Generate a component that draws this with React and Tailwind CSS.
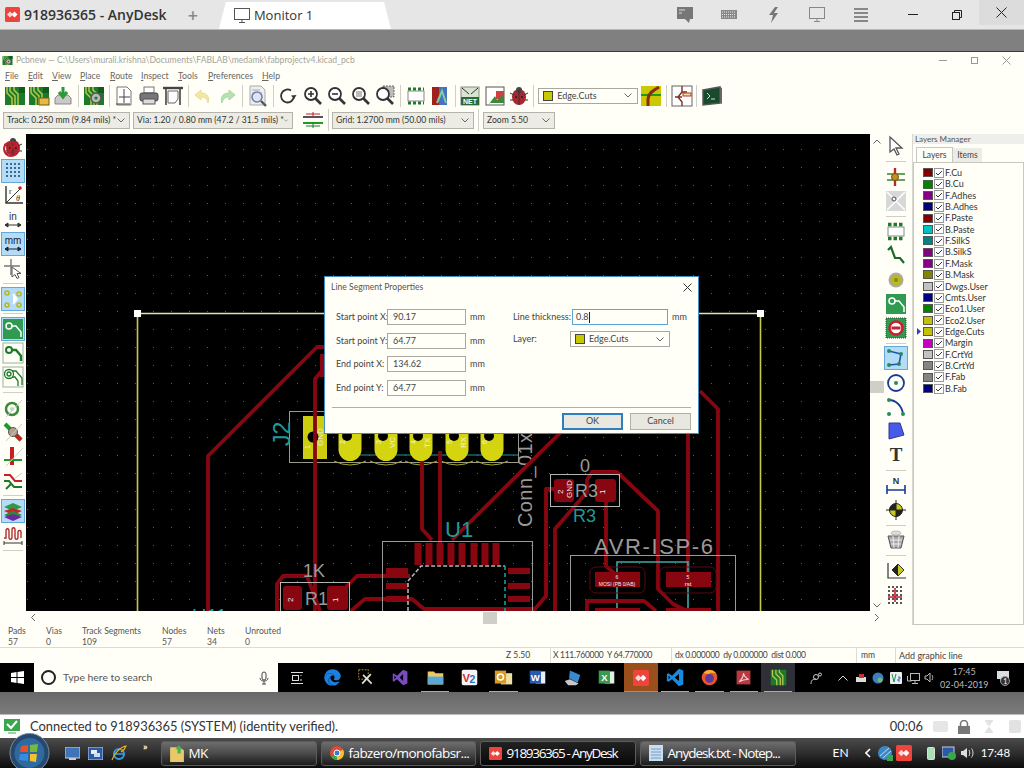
import { FaEdge } from "react-icons/fa";

const sans = "font-['Lato',sans-serif]";
const wide = "font-['Open_Sans',sans-serif]";

const Svg = ({ s = 22, v = 22, children }) => (
  <svg width={s} height={s} viewBox={`0 0 ${v} ${v}`} fill="none">{children}</svg>
);

const board = (
  <>
    <rect x="1" y="2" width="20" height="18" fill="#1c7a2a" />
    <path d="M3 2v6l5 5v7M6 2v4l5 5v9M10 2v3l4 4v11" stroke="#b9c94a" strokeWidth="1.5" />
    <rect x="15" y="2" width="6" height="6" fill="#0f5c1c" />
  </>
);

const glass = (extra) => (
  <>
    <circle cx="9" cy="9" r="6" stroke="#333" strokeWidth="1.8" fill="#fff" />
    <path d="M13.5 13.5L19 19" stroke="#333" strokeWidth="2.6" />
    {extra}
  </>
);

// top toolbar
const top = {
  newBoard: board,
  openBoard: (
    <>
      {board}
      <rect x="11" y="13" width="10" height="7" fill="#e8b93c" stroke="#6b5a1c" />
    </>
  ),
  save: (
    <>
      <path d="M3 13l3-3h10l3 3v6H3z" fill="#c9c9c9" stroke="#888" />
      <path d="M11 2v9M7 7l4 5 4-5" stroke="#2a9a3a" strokeWidth="3" />
    </>
  ),
  gearBoard: (
    <>
      {board}
      <circle cx="13" cy="13" r="5" fill="#b8b8b8" stroke="#555" strokeWidth="1.5" />
      <circle cx="13" cy="13" r="1.6" fill="#1c7a2a" />
    </>
  ),
  pageSetup: (
    <>
      <path d="M4 2h10l4 4v14H4z" stroke="#777" fill="#fff" />
      <path d="M11 4v14M6 12h11M3 19h14" stroke="#444" />
    </>
  ),
  print: (
    <>
      <rect x="6" y="2" width="10" height="6" fill="#fff" stroke="#777" />
      <rect x="2" y="8" width="18" height="8" rx="2" fill="#777" stroke="#444" />
      <rect x="5" y="14" width="12" height="5" fill="#ddd" stroke="#555" />
    </>
  ),
  plot: (
    <>
      <path d="M1 3h20" stroke="#444" strokeWidth="2.4" />
      <path d="M4 4v16M18 4v16" stroke="#444" strokeWidth="1.6" />
      <path d="M6 6h10v8l-3 4H6z" fill="#fff" stroke="#666" />
    </>
  ),
  undo: <path d="M9 5L3 10l6 5v-3c4 0 6 2 7 6 2-6-1-10-7-10z" fill="#f0e8a8" stroke="#e8dc90" />,
  redo: <path d="M13 5l6 5-6 5v-3c-4 0-6 2-7 6-2-6 1-10 7-10z" fill="#b8e0b0" stroke="#a8d8a0" />,
  find: (
    <>
      <path d="M3 1h11l4 4v15H3z" fill="#eee" stroke="#aaa" />
      <path d="M5 5h8M5 8h10" stroke="#aaa" />
      <circle cx="10" cy="12" r="5" stroke="#7080b0" strokeWidth="1.6" fill="#dfe4f2" />
      <path d="M14 16l5 5" stroke="#555" strokeWidth="2.4" />
    </>
  ),
  refresh: (
    <>
      <path d="M17 11a6.5 6.5 0 1 1-3-5.5" stroke="#333" strokeWidth="1.8" />
      <path d="M19.5 10l-2.5 4-3-3.5z" fill="#333" />
    </>
  ),
  zoomIn: glass(<path d="M6 9h6M9 6v6" stroke="#333" strokeWidth="1.6" />),
  zoomOut: glass(<path d="M6 9h6" stroke="#333" strokeWidth="1.6" />),
  zoomFit: glass(<rect x="6" y="6" width="6" height="6" fill="#bbb" />),
  zoomArea: (
    <>
      <rect x="9" y="1" width="11" height="11" fill="#bbb" stroke="#666" strokeDasharray="2 1" />
      {glass(null)}
    </>
  ),
  footprint: (
    <>
      <rect x="3" y="6" width="16" height="10" fill="#fff" stroke="#888" />
      <path d="M3 4h16M3 18h16" stroke="#1c7a2a" strokeWidth="3" strokeDasharray="3 2" />
    </>
  ),
  library: (
    <>
      <rect x="3" y="2" width="7" height="18" fill="#a02020" />
      <rect x="10" y="2" width="8" height="18" fill="#4a70c0" />
      <path d="M8 18l5-12 4 12" stroke="#7ad0a0" strokeWidth="2" />
    </>
  ),
  net: (
    <>
      <rect x="2" y="2" width="18" height="18" fill="#d8e4d0" stroke="#888" />
      <path d="M3 3l7 6M19 3l-7 6" stroke="#333" />
      <rect x="2" y="12" width="18" height="8" fill="#2c6a3a" />
      <text x="11" y="19" textAnchor="middle" fontSize="7" fontWeight="700" fill="#fff" fontFamily="Liberation Sans">NET</text>
    </>
  ),
  boardArrow: (
    <>
      <rect x="2" y="2" width="18" height="18" fill="#fff" stroke="#555" />
      <path d="M12 6h8v8h-8zM2 12l6 0" fill="#d04040" />
      <path d="M5 19l6-8 2 4 7-6v9H5z" fill="#3a8a3a" />
    </>
  ),
  bug: (
    <>
      <ellipse cx="11" cy="12" rx="7" ry="8" fill="#a82830" />
      <circle cx="11" cy="5" r="3" fill="#444" />
      <path d="M2 8l4 2M20 8l-4 2M2 15h3M20 15h-3M11 5v15" stroke="#333" />
      <circle cx="8" cy="12" r="1" fill="#222" />
      <circle cx="14" cy="12" r="1" fill="#222" />
    </>
  ),
  layerPair: (
    <>
      <rect x="1" y="1" width="20" height="20" fill="#ccc800" />
      <path d="M1 10h20" stroke="#1c9a2a" strokeWidth="2" />
      <path d="M8 21v-7c0-5 4-8 11-12" stroke="#8a2a10" strokeWidth="3" />
    </>
  ),
  schematic: (
    <>
      <rect x="1" y="1" width="20" height="20" fill="#fff" stroke="#666" />
      <path d="M11 1v6M11 7l-4 5 4 5v4M11 7h5M11 12h-7" stroke="#7a3020" strokeWidth="1.4" />
      <rect x="12" y="8" width="8" height="3" fill="#e8e0a0" stroke="#c03020" />
    </>
  ),
  terminal: (
    <>
      <path d="M2 5l17-3v16l-17 2z" fill="#1a4a2e" stroke="#555" strokeWidth="1.5" />
      <path d="M19 2l2 1v16l-2-1" fill="#666" />
      <path d="M6 8l3 3-3 3M10 14h4" stroke="#bfe8c8" />
    </>
  ),
};

// left toolbar
const left = {
  noDrc: (
    <>
      {top.bug}
      <circle cx="9" cy="13" r="7" stroke="#c02030" strokeWidth="2" />
      <path d="M4 18L14 8" stroke="#c02030" strokeWidth="2" />
    </>
  ),
  grid: <path d="M4 4h14M4 8h14M4 12h14M4 16h14" stroke="#3a6a9a" strokeWidth="2" strokeDasharray="2 2" />,
  polar: (
    <>
      <path d="M4 2v17h17" stroke="#333" strokeWidth="1.4" />
      <path d="M4 19L18 5" stroke="#333" />
      <circle cx="18" cy="4" r="1.8" fill="#c02030" />
      <text x="7" y="10" fontSize="8" fill="#333" fontFamily="Liberation Serif">r</text>
      <text x="14" y="17" fontSize="8" fill="#333" fontFamily="Liberation Serif" fontStyle="italic">θ</text>
    </>
  ),
  inch: (
    <>
      <text x="11" y="11" textAnchor="middle" fontSize="10" fill="#333" fontFamily="Liberation Sans">in</text>
      <path d="M3 16h16M3 16l3-2v4zM19 16l-3-2v4z" stroke="#333" fill="#333" />
    </>
  ),
  mm: (
    <>
      <text x="11" y="11" textAnchor="middle" fontSize="10" fill="#223" fontFamily="Liberation Sans">mm</text>
      <path d="M3 16h16M3 16l3-2v4zM19 16l-3-2v4z" stroke="#223" fill="#223" />
    </>
  ),
  cursor: (
    <>
      <path d="M9 2v16M2 9h16" stroke="#777" strokeWidth="1.4" />
      <path d="M10 10v10l3-2.5 2 4 2-1-2-4h4z" fill="#fff" stroke="#555" />
    </>
  ),
  ratsnest: (
    <>
      <path d="M11 6l4 5-4 5" fill="#fff" stroke="#fff" strokeWidth="2" />
      <circle cx="5" cy="5" r="2" stroke="#b8b820" strokeWidth="1.6" />
      <circle cx="17" cy="6" r="2" stroke="#b8b820" strokeWidth="1.6" />
      <circle cx="5" cy="17" r="2" stroke="#b8b820" strokeWidth="1.6" />
      <circle cx="17" cy="17" r="2" stroke="#b8b820" strokeWidth="1.6" />
    </>
  ),
  zoneFill: (
    <>
      <rect x="1" y="1" width="20" height="20" fill="#2f9a50" />
      <circle cx="7" cy="8" r="3" stroke="#fff" strokeWidth="1.5" />
      <path d="M10 8h4l5 6v5" stroke="#fff" strokeWidth="1.5" />
    </>
  ),
  zoneLine: (
    <>
      <rect x="1" y="1" width="20" height="20" stroke="#9cb09c" />
      <circle cx="7" cy="8" r="3" stroke="#1c7a2a" strokeWidth="2" />
      <path d="M10 8h4l5 6v5" stroke="#1c7a2a" strokeWidth="2.4" />
    </>
  ),
  zoneDouble: (
    <>
      <rect x="1" y="1" width="20" height="20" stroke="#9cb09c" />
      <circle cx="7" cy="8" r="4.5" stroke="#1c7a2a" strokeWidth="1.3" />
      <circle cx="7" cy="8" r="2" stroke="#1c7a2a" strokeWidth="1.3" />
      <path d="M10 5h4l6 7v7M10 11h3l3 4v5" stroke="#1c7a2a" strokeWidth="1.3" />
    </>
  ),
  ring: (
    <>
      <circle cx="10" cy="12" r="6" stroke="#3a8a3a" strokeWidth="2.5" />
      <circle cx="10" cy="12" r="2" fill="#bcd8bc" />
      <path d="M4 20L20 3" stroke="#ccc" />
    </>
  ),
  trackBall: (
    <>
      <path d="M3 3l16 16" stroke="#1c9a2a" strokeWidth="4" />
      <path d="M11 11l8 8" stroke="#c82020" strokeWidth="4" />
      <circle cx="11" cy="11" r="4.5" fill="#b8a090" stroke="#555" />
      <path d="M4 20L20 3" stroke="#ccc" />
    </>
  ),
  padTrack: (
    <>
      <path d="M10 2v18" stroke="#c82020" strokeWidth="4" />
      <path d="M2 15h18" stroke="#1c9a2a" strokeWidth="2" />
      <path d="M4 21L21 3" stroke="#ccc" />
    </>
  ),
  hv: (
    <>
      <path d="M2 6l6 0 5 6 7 0" stroke="#c82020" strokeWidth="2" />
      <path d="M2 12l5 0 5 6 8 0M4 20l6-6" stroke="#1c7a2a" strokeWidth="2" />
      <path d="M12 10l8-6" stroke="#ccc" />
    </>
  ),
  layers: (
    <>
      <path d="M2 7l9-4 9 4-9 4z" fill="#2e9a4a" />
      <path d="M2 11l9-3 9 3-9 4z" fill="#c82828" />
      <path d="M2 15l9-4 9 4-9 4z" fill="#2a8a3a" />
      <path d="M2 17l9-3 9 3-9 4z" fill="#6a2aa0" />
    </>
  ),
  wave: (
    <>
      <path d="M2 14h2V7c0-3 3-3 3 0v6c0 3 3 3 3 0V6c0-3 3-3 3 0v7c0 3 3 3 3 0V8c0-2 3-2 3 0v6" stroke="#b03030" strokeWidth="1.4" />
      <path d="M2 19h18M2 17v4M20 17v4" stroke="#333" />
    </>
  ),
};

// right toolbar
const right = {
  arrow: <path d="M5 2v15l4-3 3 6 2-1-3-6h6z" fill="#fff" stroke="#555" strokeWidth="1.3" />,
  route: (
    <>
      <path d="M10 2v18" stroke="#b03020" strokeWidth="2.4" />
      <path d="M2 8h18M2 14h18" stroke="#6aa05a" strokeWidth="2" />
      <circle cx="10" cy="11" r="3.5" fill="#c09020" stroke="#7a4a10" />
    </>
  ),
  local: (
    <>
      <rect x="1" y="1" width="20" height="20" fill="#d8d8d8" />
      <path d="M2 20L20 2M2 2l18 18" stroke="#fff" strokeWidth="1.5" />
      <circle cx="9" cy="9" r="2" stroke="#555" />
    </>
  ),
  addFp: left.zoneFill,
  chip: (
    <>
      <rect x="3" y="7" width="16" height="9" stroke="#888" fill="#fff" />
      <path d="M3 4.5h16M3 18.5h16" stroke="#1c7a2a" strokeWidth="3.5" strokeDasharray="3.5 2" />
    </>
  ),
  track: <path d="M3 6l3-3 4 11h5l4 5" stroke="#1c6a2a" strokeWidth="2.2" />,
  via: (
    <>
      <circle cx="11" cy="11" r="6.5" fill="#b8b820" stroke="#aaa" strokeWidth="2" />
      <circle cx="11" cy="11" r="2" fill="#8a8a10" />
    </>
  ),
  keepout: (
    <>
      <rect x="1" y="1" width="20" height="20" fill="#2f9a50" stroke="#1c5a2a" strokeDasharray="1 1" />
      <circle cx="11" cy="11" r="6.5" fill="#fff" stroke="#c82030" strokeWidth="2.5" />
      <path d="M6.5 11h9" stroke="#c82030" strokeWidth="3" />
    </>
  ),
  line: (
    <>
      <path d="M4 4l12 3-2 10-10 1" stroke="#1a58b0" strokeWidth="1.6" />
      <circle cx="4" cy="4" r="2" fill="#2a8a5a" />
      <circle cx="16" cy="7" r="2" fill="#2a8a5a" />
      <circle cx="14" cy="17" r="2" fill="#2a8a5a" />
      <circle cx="4" cy="18" r="2" fill="#2a8a5a" />
    </>
  ),
  circle: (
    <>
      <circle cx="11" cy="11" r="8" stroke="#1a3a9a" strokeWidth="1.8" />
      <circle cx="11" cy="11" r="2" fill="#2a8a5a" />
    </>
  ),
  arc: (
    <>
      <path d="M4 4c7 0 13 6 14 14" stroke="#1a3a9a" strokeWidth="1.8" />
      <circle cx="4" cy="4" r="2" fill="#2a8a5a" />
      <circle cx="4" cy="18" r="2" fill="#2a8a5a" />
      <circle cx="18" cy="18" r="2" fill="#2a8a5a" />
    </>
  ),
  poly: <path d="M4 3h11l4 12-15 4z" fill="#4a5ae8" stroke="#2a3a9a" />,
  text: <text x="11" y="17" textAnchor="middle" fontSize="19" fontWeight="700" fill="#333" fontFamily="Liberation Serif">T</text>,
  dim: (
    <>
      <text x="11" y="9" textAnchor="middle" fontSize="9" fontWeight="700" fill="#333" fontFamily="Liberation Sans">N</text>
      <path d="M2 10v9M20 10v9M2 15h18" stroke="#1a3a9a" strokeWidth="1.6" />
    </>
  ),
  target: (
    <>
      <circle cx="11" cy="11" r="6.5" fill="#c8c820" stroke="#222" />
      <path d="M11 11h6.5A6.5 6.5 0 0 1 11 17.5zM11 11h-6.5A6.5 6.5 0 0 1 11 4.5z" fill="#222" />
      <path d="M1 11h20M11 1v20" stroke="#222" />
    </>
  ),
  trash: (
    <>
      <path d="M3 7h16l-3 12H6z" fill="#aaa" stroke="#555" />
      <path d="M5 11h12M6 15h10M8 7l1 12M14 7l-1 12" stroke="#eee" />
      <ellipse cx="11" cy="4" rx="5" ry="2" fill="#ddd" stroke="#bbb" />
    </>
  ),
  origin: (
    <>
      <path d="M3 3v15h18" stroke="#333" strokeWidth="1.2" />
      <path d="M13 4l6 6-6 6-6-6z" fill="#c8c820" stroke="#333" />
      <path d="M13 4v12h0l-6-6z" fill="#222" />
    </>
  ),
  gridOrigin: (
    <>
      <path d="M3 3h16M3 7h16M3 11h16M3 15h16M3 19h16" stroke="#555" strokeWidth="1.8" strokeDasharray="2 2" />
      <path d="M10 4v14M3 13h14" stroke="#c02030" strokeWidth="1.6" />
    </>
  ),
};

const Sep = ({ vertical }) =>
  vertical ? (
    <div className="flex h-[6.3px] w-full items-center justify-center">
      <div className="h-px w-[20px] bg-[#cfcfc8]" />
    </div>
  ) : (
    <div className="flex h-full w-[6.3px] items-center justify-center">
      <div className="h-[22px] w-px bg-[#cfcfc8]" />
    </div>
  );

const Tool = ({ icon, active, vertical }) => (
  <div className={`flex shrink-0 items-center justify-center ${vertical ? "h-[24.2px] w-full" : "h-full w-[24.2px]"}`}>
    <div className={`flex h-[24px] w-[24px] items-center justify-center ${active ? "border border-[#62a8d8] bg-[#b4dcf6]" : ""}`}>
      <Svg>{icon}</Svg>
    </div>
  </div>
);

const Chevron = ({ className = "" }) => (
  <svg className={className} width="8" height="5" viewBox="0 0 8 5" fill="none">
    <path d="M0.5 0.5L4 4l3.5-3.5" stroke="#666" />
  </svg>
);

const Combo = ({ className, children }) => (
  <div className={`flex h-[17px] shrink-0 items-center justify-between border border-[#b4b4ac] bg-[#ecece4] pl-[3px] pr-[4px] text-[8.6px] text-[#333] ${className}`}>
    <span className="whitespace-nowrap">{children}</span>
    <Chevron />
  </div>
);

const menus = [
  ["F", "ile", "w-[23px]"],
  ["E", "dit", "w-[24px]"],
  ["V", "iew", "w-[28px]"],
  ["P", "lace", "w-[30px]"],
  ["R", "oute", "w-[31px]"],
  ["I", "nspect", "w-[37px]"],
  ["T", "ools", "w-[30px]"],
  ["P", "references", "w-[54px]"],
  ["H", "elp", "w-[24px]"],
];

const layers = [
  ["F.Cu", "bg-[#840000]"],
  ["B.Cu", "bg-[#008400]"],
  ["F.Adhes", "bg-[#840084]"],
  ["B.Adhes", "bg-[#000084]"],
  ["F.Paste", "bg-[#840000]"],
  ["B.Paste", "bg-[#00c2c2]"],
  ["F.SilkS", "bg-[#008484]"],
  ["B.SilkS", "bg-[#840084]"],
  ["F.Mask", "bg-[#840084]"],
  ["B.Mask", "bg-[#848400]"],
  ["Dwgs.User", "bg-[#c2c2c2]"],
  ["Cmts.User", "bg-[#000084]"],
  ["Eco1.User", "bg-[#008400]"],
  ["Eco2.User", "bg-[#c2c200]"],
  ["Edge.Cuts", "bg-[#c2c200]"],
  ["Margin", "bg-[#c200c2]"],
  ["F.CrtYd", "bg-[#c2c2c2]"],
  ["B.CrtYd", "bg-[#848484]"],
  ["F.Fab", "bg-[#848484]"],
  ["B.Fab", "bg-[#000084]"],
];

const stats = [
  ["Pads", "57", "w-[38px]"],
  ["Vias", "0", "w-[36px]"],
  ["Track Segments", "109", "w-[80px]"],
  ["Nodes", "57", "w-[45px]"],
  ["Nets", "34", "w-[38px]"],
  ["Unrouted", "0", "w-[60px]"],
];

function PcbCanvas() {
  const red = "#87060f";
  const gray = "#9a9a9a";
  const teal = "#1f9a9a";
  const trace = { stroke: red, strokeWidth: 3.8, fill: "none", strokeLinejoin: "round" };
  const jPads = [
    [350, "2", ""],
    [386, "3", "VC"],
    [421, "4", "TX"],
    [457, "5", "RX"],
    [492, "6", ""],
  ];
  return (
    <svg className="h-full w-full" viewBox="26 135 844 477" fontFamily="Liberation Sans">
      <defs>
        <pattern id="dots" x="9" y="6" width="18" height="18" patternUnits="userSpaceOnUse">
          <rect width="1" height="1" fill="#5f5f48" />
        </pattern>
      </defs>
      <rect x="26" y="135" width="844" height="477" fill="#000" />
      <rect x="26" y="135" width="844" height="477" fill="url(#dots)" />

      {/* board edge */}
      <path d="M137.5 612V314M760.5 314V612" stroke="#c8c84a" strokeWidth="1.6" />
      <path d="M137 314.5H760" stroke="#e2e2b8" strokeWidth="1.6" />
      <rect x="134" y="311" width="7" height="7" fill="#fff" />
      <rect x="757" y="311" width="7" height="7" fill="#fff" />

      {/* J2 */}
      <rect x="289.5" y="412.5" width="229" height="51" stroke="#9a9a8a" fill="none" />
      <path d="M340 456H518" stroke="#1f9a9a" />
      <rect x="303" y="417" width="24" height="43" fill="#cccc10" />
      {jPads.map(([x, num, name]) => (
        <g key={x}>
          <rect x={x - 11.5} y="405" width="23" height="57" rx="11.5" fill="#d4d410" />
          <path d={`M${x - 16} 462q16 8 32 0`} stroke="#a8a830" fill="none" />
          <circle cx={x - 3} cy="437" r="5" fill="#000" />
          <text transform={`translate(${x - 5} 445) rotate(-90)`} fontSize="7" fill="#f4f4d8">{num}</text>
          <text transform={`translate(${x + 9} 449) rotate(-90)`} fontSize="8" fill="#f4f4d8">{name}</text>
        </g>
      ))}
      <circle cx="313" cy="438" r="5.5" fill="#000" />
      <text transform="translate(323 447) rotate(-90)" fontSize="8" fill="#f4f4d8">GND</text>
      <text transform="translate(310 450) rotate(-90)" fontSize="7" fill="#f4f4d8">1</text>
      <text transform="translate(290 447) rotate(-90)" fontSize="23" fill={teal}>J2</text>
      <text transform="translate(532 528) rotate(-90)" fontSize="20" textLength="94" fill={gray}>Conn_01x</text>

      {/* tracks */}
      <path d="M208 612V457L317 348H325" {...trace} />
      <path d="M315 612V380L325 368" {...trace} />
      <rect x="320" y="355" width="7" height="23" fill={red} />
      <path d="M422 462V530L432 541" {...trace} />
      <path d="M440 452V545" {...trace} />
      <path d="M561 433L452 541" {...trace} />
      <path d="M555 490H546V597L535 610H424L412 600H365L351 612" {...trace} />
      <path d="M555 612V530L587 493V481L592 473H617L658 512V590L673 605L687 612" {...trace} />
      <path d="M606 503V567L615 575" {...trace} />
      <path d="M688 434V575" {...trace} />
      <path d="M700 392L718 410V612" {...trace} />
      <path d="M410 577H357L347 587L343 597" {...trace} />
      <path d="M277 612V585L283 577H307L320 612" {...trace} />

      {/* U1 */}
      <rect x="382.5" y="542.5" width="150" height="80" stroke={gray} fill="none" />
      {[418, 429, 440, 451, 462, 474, 485, 496].map((x) => (
        <rect key={x} x={x - 3.5} y="544" width="7" height="22" fill={red} />
      ))}
      {[572, 587, 600].map((y) => (
        <g key={y}>
          <rect x="386" y={y - 3} width="22" height="6" fill={red} />
          <rect x="508" y={y - 3} width="22" height="6" fill={red} />
        </g>
      ))}
      <path d="M408 612V582L421 567H505" stroke="#b4b4b4" strokeWidth="1.6" strokeDasharray="4 2" fill="none" />
      <path d="M505 567V612" stroke="#1f9a9a" strokeWidth="1.6" strokeDasharray="4 3" fill="none" />
      <text x="445" y="538" fontSize="22" fill={teal}>U1</text>

      {/* R1 */}
      <rect x="280.5" y="583.5" width="69" height="40" stroke="#b4b4b4" fill="none" />
      <rect x="283" y="587" width="19" height="24" rx="3" fill={red} />
      <rect x="327" y="587" width="21" height="24" rx="3" fill={red} />
      <text x="303" y="578" fontSize="18" fill={gray}>1K</text>
      <text x="305" y="606" fontSize="18" fill={gray}>R1</text>
      <text transform="translate(293 603) rotate(-90)" fontSize="8" fill="#eee">2</text>
      <text transform="translate(338 603) rotate(-90)" fontSize="8" fill="#eee">1</text>

      {/* R3 */}
      <rect x="550.5" y="475.5" width="69" height="32" stroke="#b4b4b4" fill="none" />
      <rect x="554" y="480" width="20" height="23" rx="3" fill={red} />
      <rect x="595" y="480" width="21" height="23" rx="3" fill={red} />
      <text x="580" y="473" fontSize="18" fill={gray}>0</text>
      <text x="575" y="498" fontSize="18" fill={gray}>R3</text>
      <text x="573" y="523" fontSize="18" fill={teal}>R3</text>
      <text transform="translate(563 495) rotate(-90)" fontSize="8" fill="#eee">2</text>
      <text transform="translate(572 499) rotate(-90)" fontSize="8" fill="#eee">GND</text>
      <text transform="translate(605 495) rotate(-90)" fontSize="8" fill="#eee">1</text>

      {/* AVR-ISP-6 */}
      <text x="594" y="555" fontSize="22" textLength="119" fill={gray}>AVR-ISP-6</text>
      <rect x="570.5" y="556.5" width="165" height="70" stroke={gray} fill="none" />
      <path d="M617 612V563H688V612" stroke="#3fa8a8" strokeWidth="1.6" fill="none" />
      <rect x="590" y="568" width="55" height="26" rx="6" stroke="#5a0a10" fill="none" />
      <rect x="660" y="568" width="56" height="26" rx="6" stroke="#5a0a10" fill="none" />
      <rect x="595" y="573" width="45" height="15" fill={red} />
      <rect x="666" y="573" width="45" height="15" fill={red} />
      <text x="617" y="580" textAnchor="middle" fontSize="5" fill="#eee">6</text>
      <text x="617" y="587" textAnchor="middle" fontSize="5" fill="#eee">MOSI (PB 0/AB)</text>
      <text x="688" y="580" textAnchor="middle" fontSize="5" fill="#eee">5</text>
      <text x="688" y="587" textAnchor="middle" fontSize="6" fill="#eee">rst</text>
      <path d="M587 612V602H644L656 612" {...trace} />
      <rect x="595" y="609" width="45" height="5" fill={red} />
      <rect x="666" y="609" width="45" height="5" fill={red} />
      <text x="192" y="624" fontSize="20" fill={teal}>U11</text>
    </svg>
  );
}

function Dialog() {
  const field = "flex h-[16px] w-[79px] items-center border border-[#a8a8a0] bg-[#fffff8] pl-[5px]";
  const rows = [
    ["Start point X:", "90.17"],
    ["Start point Y:", "64.77"],
    ["End point X:", "134.62"],
    ["End point Y:", "64.77"],
  ];
  return (
    <div className="absolute left-[324px] top-[276px] flex h-[158px] w-[375px] flex-col border border-[#3f8fc4] bg-[#fffff8] text-[9px] text-[#444]">
      <div className="flex h-[21px] items-center justify-between pl-[6px] pr-[6px]">
        <span className="text-[8.6px] text-[#555]">Line Segment Properties</span>
        <svg width="9" height="9" viewBox="0 0 9 9" fill="none">
          <path d="M0.5 0.5l8 8M8.5 0.5l-8 8" stroke="#333" />
        </svg>
      </div>
      <div className="flex pl-[11px] pt-[11px]">
        <div className="flex w-[177px] flex-col gap-[7.5px]">
          {rows.map(([label, value]) => (
            <div key={label} className="flex items-center">
              <span className="w-[51px] whitespace-nowrap">{label}</span>
              <div className={field}>{value}</div>
              <span className="ml-[4px]">mm</span>
            </div>
          ))}
        </div>
        <div className="flex flex-col gap-[6px]">
          <div className="flex items-center">
            <span className="w-[59px] whitespace-nowrap">Line thickness:</span>
            <div className="flex h-[16px] w-[96px] items-center border border-[#5aa8d8] pl-[3px]">
              0.8<span className="h-[11px] w-px bg-[#222]" />
            </div>
            <span className="ml-[4px]">mm</span>
          </div>
          <div className="flex items-center">
            <span className="w-[57px]">Layer:</span>
            <div className="flex h-[16px] w-[100px] items-center justify-between border border-[#a8a8a0] pl-[4px] pr-[5px]">
              <span className="flex items-center gap-[4px]">
                <span className="h-[10px] w-[10px] border border-[#444] bg-[#c8c800]" />
                Edge.Cuts
              </span>
              <Chevron />
            </div>
          </div>
        </div>
      </div>
      <div className="mx-[7px] mt-[11px] h-px bg-[#b0b0a8]" />
      <div className="flex justify-end gap-[7px] pr-[7px] pt-[5px]">
        <div className="flex h-[17px] w-[61px] items-center justify-center border-2 border-[#2f7fc0] bg-[#e8e8e0]">OK</div>
        <div className="flex h-[17px] w-[61px] items-center justify-center border border-[#b0b0a8] bg-[#e8e8e0]">Cancel</div>
      </div>
    </div>
  );
}

function AnyDeskMark({ s = 15 }) {
  return (
    <svg width={s} height={s} viewBox="0 0 15 15">
      <rect width="15" height="15" rx="1.5" fill="#ef443b" />
      <path d="M5 4.5l3 3-3 3-3-3z" fill="#fff" opacity="0.8" />
      <path d="M9.5 4.5l3 3-3 3-3-3z" fill="#fff" />
    </svg>
  );
}

const taskIcons = {
  tools: (
    <>
      <rect x="2" y="2" width="11" height="11" stroke="#c8a030" strokeDasharray="2 1.5" />
      <path d="M6 18L16 7M7 8l10 10" stroke="#ddd" strokeWidth="2" />
    </>
  ),
  vs: <path d="M14 2l5 2v14l-5 2-7-7-4 3-1-1V7l1-1 4 3zM14 7l-4 4 4 4zM4 9v4l2-2z" fill="#7a4ac0" />,
  folder: (
    <>
      <path d="M2 4h7l2 2h9v13H2z" fill="#e8c868" />
      <rect x="2" y="10" width="18" height="9" fill="#58a8d8" />
    </>
  ),
  v2: (
    <>
      <rect x="2" y="2" width="18" height="18" rx="2" fill="#f4f4f4" />
      <text x="3" y="16" fontSize="13" fontWeight="700" fill="#c83030" fontFamily="Liberation Sans">V</text>
      <text x="11" y="17" fontSize="12" fontWeight="700" fill="#2a70c0" fontFamily="Liberation Sans">2</text>
    </>
  ),
  outlook: (
    <>
      <rect x="8" y="6" width="13" height="13" fill="#f0e0a0" />
      <rect x="1" y="3" width="13" height="15" fill="#d89a20" />
      <circle cx="7.5" cy="10.5" r="3.5" stroke="#fff" strokeWidth="1.8" />
    </>
  ),
  word: (
    <>
      <rect x="9" y="4" width="11" height="14" fill="#e8eef8" />
      <rect x="2" y="3" width="13" height="15" fill="#2a5ab0" />
      <text x="8.5" y="15" textAnchor="middle" fontSize="11" fontWeight="700" fill="#fff" fontFamily="Liberation Sans">W</text>
    </>
  ),
  laptop: (
    <>
      <path d="M8 3l12 5-3 9-10-5z" fill="#3a8ad0" />
      <path d="M2 15l6-2 10 5-3 2H6z" fill="#c8c8c8" />
    </>
  ),
  excel: (
    <>
      <rect x="9" y="4" width="11" height="14" fill="#e0f0e0" />
      <rect x="2" y="3" width="13" height="15" fill="#3a9a50" />
      <text x="8.5" y="15" textAnchor="middle" fontSize="11" fontWeight="700" fill="#fff" fontFamily="Liberation Sans">X</text>
    </>
  ),
  vscode: <path d="M15 1l5 2v16l-5 2-8-8-4 3-2-1V7l2-1 4 3zM15 7l-5 4 5 4zM3 9v4l2-2z" fill="#1a8ae0" />,
  firefox: (
    <>
      <circle cx="11" cy="11" r="9" fill="#e8562a" />
      <circle cx="11" cy="12" r="5" fill="#5a3a9a" />
      <path d="M4 6c4-5 12-5 15 1-3-2-7-2-9 0z" fill="#f8b030" />
    </>
  ),
  acrobat: (
    <>
      <rect x="3" y="3" width="16" height="16" fill="#b83a40" />
      <path d="M6 16c3-3 5-6 5-10 1 5 3 6 6 7-5 0-8 1-11 3z" stroke="#f0d0d0" strokeWidth="1.3" />
    </>
  ),
  kicad: (
    <>
      <rect x="2" y="2" width="18" height="18" fill="#1c7a2a" />
      <path d="M4 2v7l5 5v6M8 2v5l5 5v8M12 2v3l4 4v11" stroke="#b9c94a" strokeWidth="1.5" />
    </>
  ),
};

const taskbarCells = [
  { key: "edge", edge: true },
  { key: "tools" },
  { key: "vs" },
  { key: "folder", line: true },
  { key: "v2" },
  { key: "outlook", line: true },
  { key: "word" },
  { key: "laptop" },
  { key: "excel" },
  { key: "anydesk", flash: true },
  { key: "vscode", line: true },
  { key: "firefox", line: true },
  { key: "acrobat", line: true },
  { key: "kicad", line: true, current: true },
];

function WinTaskbar() {
  return (
    <div className="flex h-[29px] bg-black">
      <div className="flex w-[34px] items-center justify-center">
        <svg width="13" height="13" viewBox="0 0 13 13" fill="#fff">
          <path d="M0 2l5.5-1v5H0zM6.5 1L13 0v6H6.5zM0 7h5.5v5L0 11zM6.5 7H13v6l-6.5-1z" />
        </svg>
      </div>
      <div className="flex w-[244px] items-center bg-[#fffff8] pl-[7px] pr-[9px] text-[10.4px] text-[#555]">
        <div className="h-[15px] w-[15px] rounded-full border-2 border-[#222]" />
        <span className="ml-[7px] flex-1">Type here to search</span>
        <svg width="10" height="14" viewBox="0 0 10 14" fill="none" stroke="#444">
          <rect x="3" y="1" width="4" height="8" rx="2" />
          <path d="M1 7c0 4 8 4 8 0M5 10v3M3 13h4" />
        </svg>
      </div>
      <div className="flex w-[37px] items-center justify-center">
        <svg width="12" height="12" viewBox="0 0 12 12" fill="none" stroke="#ddd">
          <path d="M0 0.5h12M0 11.5h12" />
          <rect x="1.5" y="3.5" width="6" height="5" />
          <path d="M10 3v1M10 7v2" />
        </svg>
      </div>
      {taskbarCells.map(({ key, edge, line, flash, current }) => (
        <div
          key={key}
          className={`relative flex w-[34.3px] items-center justify-center ${flash ? "bg-[#9a4e1c]" : ""} ${current ? "bg-[#2f2f38]" : ""}`}
        >
          {edge && <FaEdge className="text-[17px] text-[#1a80e0]" />}
          {flash && <AnyDeskMark s={16} />}
          {!edge && !flash && <Svg s={19}>{taskIcons[key]}</Svg>}
          {line && <div className="absolute bottom-0 left-[3px] right-[3px] h-[1.5px] bg-[#76b9ed]" />}
          {flash && <div className="absolute bottom-0 left-0 right-0 h-[1.5px] bg-[#ee7a18]" />}
        </div>
      ))}
      <div className="flex flex-1 items-center pl-[15px] text-[#bbb]">
        <svg width="14" height="14" viewBox="0 0 14 14" fill="none" stroke="#ccc">
          <circle cx="6" cy="6" r="2.5" />
          <path d="M1 13c0-4 2-5 5-5" />
          <circle cx="10" cy="3.5" r="1.5" />
        </svg>
        <svg className="ml-[14px]" width="10" height="6" viewBox="0 0 10 6" fill="none" stroke="#ddd">
          <path d="M0.5 5.5L5 1l4.5 4.5" />
        </svg>
        <svg className="ml-[7px]" width="12" height="11" viewBox="0 0 12 11">
          <path d="M1 5h10v5H1z" fill="#ddd" />
          <path d="M4 2h5v4H4z" fill="#d03030" />
        </svg>
        <svg className="ml-[5px]" width="12" height="12" viewBox="0 0 12 12">
          <circle cx="6" cy="6" r="5.5" fill="#3a80c0" />
          <circle cx="8" cy="8" r="2.5" fill="#7ab070" />
        </svg>
        <svg className="ml-[6px]" width="12" height="12" viewBox="0 0 12 12">
          <rect width="12" height="12" rx="1" fill="#eee" />
          <path d="M2 2l2 8 2-8" stroke="#1a8a50" fill="none" />
          <path d="M8 5h2v2H8v2h2" stroke="#2a70c0" fill="none" />
        </svg>
        <svg className="ml-[5px]" width="13" height="12" viewBox="0 0 13 12" fill="none" stroke="#bbb">
          <rect x="3.5" y="1.5" width="9" height="7" />
          <path d="M0.5 4v5h4M8 9v2M5 11.5h6" />
        </svg>
        <svg className="ml-[4px]" width="11" height="11" viewBox="0 0 11 11" fill="none" stroke="#bbb">
          <path d="M1 4h2l3-3v9L3 7H1zM8 3c1 2 1 3 0 5" />
        </svg>
        <div className="ml-[7px] flex w-[44px] flex-col items-center text-[9px] leading-[13px]">
          <span>17:45</span>
          <span className="whitespace-nowrap">02-04-2019</span>
        </div>
        <div className="relative ml-[11px]">
          <svg width="13" height="13" viewBox="0 0 13 13" fill="#ddd">
            <path d="M0 0h12v8H5l-2 3V8H0z" />
          </svg>
          <span className="absolute left-[3px] top-[5px] flex h-[10px] w-[10px] items-center justify-center rounded-full border border-[#999] bg-[#333] text-[7px] text-white">1</span>
        </div>
      </div>
    </div>
  );
}

function GlassButton({ width, active, icon, tracking, children }) {
  return (
    <div
      className={`flex h-[25px] items-center gap-[5px] overflow-hidden whitespace-nowrap rounded-[3px] border border-[#5c5c5c] pl-[8px] text-[13.5px] text-white ${wide} ${width} ${
        active ? "bg-linear-to-b from-[#222] to-[#080808]" : "bg-linear-to-b from-[#6e6e6e] via-[#4a4a4a] to-[#1c1c1c]"
      }`}
    >
      {icon}
      <span className={tracking}>{children}</span>
    </div>
  );
}

export default function App() {
  return (
    <div className={`relative flex h-[768px] w-[1024px] flex-col overflow-hidden bg-[#808080] ${sans}`}>
      {/* AnyDesk tab bar */}
      <div className={`flex h-[30px] shrink-0 items-center border-b border-[#b8b8b8] bg-[#e6e6e6] ${wide}`}>
        <div className="ml-[5px]">
          <AnyDeskMark />
        </div>
        <span className="ml-[4px] whitespace-nowrap text-[14px] font-semibold text-[#333]">918936365 - AnyDesk</span>
        <span className="ml-[21px] text-[18px] font-semibold leading-none text-[#888]">+</span>
        <div className="ml-[21px] flex h-[27px] w-[172px] items-center self-end bg-white pl-[15px] [clip-path:polygon(4%_0,96%_0,100%_100%,0_100%)]">
          <svg width="16" height="15" viewBox="0 0 16 15" fill="none" stroke="#555">
            <rect x="0.5" y="0.5" width="15" height="11" />
            <path d="M8 12v2M5 14.5h6" />
          </svg>
          <span className="ml-[4px] text-[13px] text-[#333]">Monitor 1</span>
        </div>
        <div className="ml-auto flex h-full items-center text-[#777]">
          <div className="flex w-[44px] justify-center">
            <svg width="16" height="16" viewBox="0 0 16 16">
              <path d="M0 0h16v12h-3l-1 4-4-4H0z" fill="#777" />
              <path d="M2 3h6M2 6h3" stroke="#ddd" />
            </svg>
          </div>
          <div className="flex w-[44px] justify-center">
            <svg width="16" height="9" viewBox="0 0 16 9">
              <rect width="16" height="9" fill="#888" />
              <path d="M1 2h14M1 4.5h14M1 7h14" stroke="#e6e6e6" strokeDasharray="1 1" />
            </svg>
          </div>
          <div className="flex w-[44px] justify-center">
            <svg width="11" height="16" viewBox="0 0 11 16">
              <path d="M7 0L1 8h4l-2 8 7-10H6l4-6z" fill="#777" />
            </svg>
          </div>
          <div className="flex w-[44px] justify-center">
            <svg width="16" height="15" viewBox="0 0 16 15" fill="none" stroke="#888">
              <rect x="0.5" y="0.5" width="15" height="11" />
              <path d="M8 12v2M5 14.5h6" />
            </svg>
          </div>
          <div className="flex w-[44px] justify-center">
            <svg width="14" height="14" viewBox="0 0 14 14" fill="none" stroke="#888" strokeWidth="2">
              <path d="M0 1h14M0 5h14M0 9h14M0 13h14" />
            </svg>
          </div>
          <div className="flex w-[52px] justify-center pl-[8px]">
            <div className="h-px w-[10px] bg-[#222]" />
          </div>
          <div className="flex w-[44px] justify-center">
            <svg width="10" height="10" viewBox="0 0 10 10" fill="none" stroke="#222">
              <rect x="0.5" y="2.5" width="7" height="7" />
              <path d="M2.5 2.5v-2h7v7h-2" />
            </svg>
          </div>
          <div className="flex h-[25px] w-[45px] items-center justify-center self-start bg-[#dcdcdc]">
            <svg width="11" height="11" viewBox="0 0 11 11" fill="none" stroke="#222">
              <path d="M0.5 0.5l10 10M10.5 0.5l-10 10" />
            </svg>
          </div>
        </div>
      </div>

      {/* gray band above the remote screen */}
      <div className="h-[22px] shrink-0 border-b border-[#3a3a3a] bg-[#808080]" />

      {/* Pcbnew window */}
      <div className="flex h-[611px] shrink-0 flex-col bg-[#fffff8]">
        <div className="flex h-[16px] items-center pl-[2px] pr-[13px] text-[8.6px] text-[#a4a49c]">
          <Svg s={11}>{top.gearBoard}</Svg>
          <span className="ml-[3px] whitespace-nowrap">Pcbnew — C:\Users\murali.krishna\Documents\FABLAB\medamk\fabprojectv4.kicad_pcb</span>
          <div className="ml-auto flex items-center gap-[24px] text-[#aaa]">
            <div className="h-px w-[8px] bg-[#999]" />
            <div className="h-[7px] w-[7px] border border-[#999]" />
            <svg width="9" height="9" viewBox="0 0 9 9" fill="none" stroke="#999">
              <path d="M0.5 0.5l8 8M8.5 0.5l-8 8" />
            </svg>
          </div>
        </div>
        <div className="flex h-[15px] items-center pl-[5px] text-[8.7px] text-[#666]">
          {menus.map(([first, rest, w], i) => (
            <span key={i} className={`whitespace-nowrap ${w}`}>
              <span className="underline">{first}</span>
              {rest}
            </span>
          ))}
        </div>
        {/* main toolbar */}
        <div className="flex h-[25px] shrink-0 items-center pl-[3px]">
          <Tool icon={top.newBoard} />
          <Tool icon={top.openBoard} />
          <Tool icon={top.save} />
          <Sep />
          <Tool icon={top.gearBoard} />
          <Sep />
          <Tool icon={top.pageSetup} />
          <Tool icon={top.print} />
          <Tool icon={top.plot} />
          <Sep />
          <Tool icon={top.undo} />
          <Tool icon={top.redo} />
          <Sep />
          <Tool icon={top.find} />
          <Sep />
          <Tool icon={top.refresh} />
          <Tool icon={top.zoomIn} />
          <Tool icon={top.zoomOut} />
          <Tool icon={top.zoomFit} />
          <Tool icon={top.zoomArea} />
          <Sep />
          <Tool icon={top.footprint} />
          <Tool icon={top.library} />
          <Sep />
          <Tool icon={top.net} />
          <Tool icon={top.boardArrow} />
          <Tool icon={top.bug} />
          <Sep />
          <div className="ml-[1px] flex h-[16px] w-[100px] items-center justify-between border border-[#a8a8a0] pl-[4px] pr-[5px] text-[9px] text-[#444]">
            <span className="flex items-center gap-[4px]">
              <span className="h-[10px] w-[10px] border border-[#444] bg-[#c8c800]" />
              Edge.Cuts
            </span>
            <Chevron />
          </div>
          <div className="ml-[1px]">
            <Tool icon={top.layerPair} />
          </div>
          <Sep />
          <Tool icon={top.schematic} />
          <Sep />
          <Tool icon={top.terminal} />
        </div>
        {/* track / via / grid / zoom */}
        <div className="flex h-[26px] shrink-0 items-center pb-[2px] pl-[3px]">
          <Combo className="w-[127px]">Track: 0.250 mm (9.84 mils) *</Combo>
          <Combo className="ml-[3px] w-[160px]">Via: 1.20 / 0.80 mm (47.2 / 31.5 mils) *</Combo>
          <div className="ml-[9px] flex w-[22px] justify-center">
            <svg width="20" height="18" viewBox="0 0 20 18" fill="none">
              <path d="M0 6h20" stroke="#555" strokeWidth="2" />
              <path d="M0 12h20" stroke="#1c9a2a" strokeWidth="2" />
              <path d="M3 3h14M10 1v5" stroke="#c02030" />
              <path d="M3 15h14M10 12v5" stroke="#1c7a2a" />
            </svg>
          </div>
          <div className="ml-[4px] mr-[3px] h-[22px] w-px bg-[#cfcfc8]" />
          <Combo className="w-[142px]">Grid: 1.2700 mm (50.00 mils)</Combo>
          <div className="ml-[4px] mr-[4px] h-[22px] w-px bg-[#cfcfc8]" />
          <Combo className="w-[72px]">Zoom 5.50</Combo>
        </div>

        {/* canvas and side tools */}
        <div className="flex min-h-0 flex-1">
          <div className="flex w-[26px] shrink-0 flex-col pt-[1px]">
            <Tool vertical icon={left.noDrc} />
            <Tool vertical active icon={left.grid} />
            <Tool vertical icon={left.polar} />
            <Tool vertical icon={left.inch} />
            <Tool vertical active icon={left.mm} />
            <Tool vertical icon={left.cursor} />
            <Sep vertical />
            <Tool vertical active icon={left.ratsnest} />
            <Sep vertical />
            <Tool vertical active icon={left.zoneFill} />
            <Tool vertical icon={left.zoneLine} />
            <Tool vertical icon={left.zoneDouble} />
            <Sep vertical />
            <Tool vertical icon={left.ring} />
            <Tool vertical icon={left.trackBall} />
            <Tool vertical icon={left.padTrack} />
            <Tool vertical icon={left.hv} />
            <Sep vertical />
            <Tool vertical active icon={left.layers} />
            <Tool vertical icon={left.wave} />
            <Sep vertical />
          </div>

          <div className="flex w-[858px] shrink-0 flex-col">
            <div className="flex h-[477px] shrink-0">
              <div className="h-full w-[844px] shrink-0">
                <PcbCanvas />
              </div>
              <div className="flex w-[14px] flex-col items-center pt-[5px]">
                <Chevron className="rotate-180" />
                <div className="mt-[237px] h-[12px] w-full bg-[#cfcfc8]" />
                <Chevron className="mb-[3px] mt-auto" />
              </div>
            </div>
            <div className="flex h-[13px] shrink-0 items-center px-[3px]">
              <Chevron className="rotate-90" />
              <div className="ml-[446px] h-[12px] w-[14px] bg-[#cfcfc8]" />
              <Chevron className="ml-auto -rotate-90" />
            </div>
          </div>

          <div className="flex w-[24px] shrink-0 flex-col">
            <Tool vertical icon={right.arrow} />
            <Sep vertical />
            <Tool vertical icon={right.route} />
            <Tool vertical icon={right.local} />
            <Sep vertical />
            <Tool vertical icon={right.chip} />
            <Tool vertical icon={right.track} />
            <Tool vertical icon={right.via} />
            <Tool vertical icon={right.addFp} />
            <Tool vertical icon={right.keepout} />
            <Sep vertical />
            <Tool vertical active icon={right.line} />
            <Tool vertical icon={right.circle} />
            <Tool vertical icon={right.arc} />
            <Tool vertical icon={right.poly} />
            <Tool vertical icon={right.text} />
            <Sep vertical />
            <Tool vertical icon={right.dim} />
            <Tool vertical icon={right.target} />
            <Sep vertical />
            <Tool vertical icon={right.trash} />
            <Sep vertical />
            <Tool vertical icon={right.origin} />
            <Tool vertical icon={right.gridOrigin} />
          </div>

          {/* layers manager */}
          <div className="ml-[4px] flex min-w-0 flex-1 flex-col border-l border-[#d8d8d0] text-[9px]">
            <div className="flex h-[10px] items-center bg-[#eeeeea] pl-[2px] text-[8px] text-[#555]">Layers Manager</div>
            <div className="flex h-[18px] items-end pl-[3px]">
              <div className="flex h-[15px] w-[37px] items-center justify-center border border-b-0 border-[#c8c8c0] text-[8.5px] text-[#444]">Layers</div>
              <div className="flex h-[14px] w-[29px] items-center justify-center bg-[#ecece6] text-[8.5px] text-[#444]">Items</div>
            </div>
            <div className="flex flex-1 flex-col border border-[#c8c8c0] pl-[9px] pt-[4px]">
              {layers.map(([name, swatch]) => (
                <div key={name} className="relative flex h-[11.37px] items-center">
                  {name === "Edge.Cuts" && (
                    <svg className="absolute left-[-6px]" width="4" height="7" viewBox="0 0 4 7">
                      <path d="M0 0l4 3.5L0 7z" fill="#3a3ac8" />
                    </svg>
                  )}
                  <div className={`h-[9px] w-[10px] border border-[#555] ${swatch}`} />
                  <svg className="ml-[1px]" width="10" height="10" viewBox="0 0 10 10" fill="none">
                    <rect x="0.5" y="0.5" width="9" height="9" stroke="#999" fill="#fff" />
                    <path d="M2 5l2 2 4-4" stroke="#333" />
                  </svg>
                  <span className="ml-[1px] whitespace-nowrap text-[#333]">{name}</span>
                </div>
              ))}
            </div>
          </div>
        </div>

        {/* message panel */}
        <div className="flex h-[23px] shrink-0 items-start border-b border-[#dcdcd4] pl-[8px] pt-[1px] text-[8.6px] leading-[11px] text-[#555]">
          {stats.map(([label, value, w]) => (
            <div key={label} className={`flex flex-col whitespace-nowrap ${w}`}>
              <span>{label}</span>
              <span>{value}</span>
            </div>
          ))}
        </div>
        {/* status bar */}
        <div className="flex h-[15px] shrink-0 items-center pl-[506px] text-[8.5px] text-[#444]">
          <span className="w-[45px] border-r border-[#dcdcd4] leading-[15px]">Z 5.50</span>
          <span className="w-[121px] whitespace-nowrap border-r border-[#dcdcd4] pl-[2px] leading-[15px] tracking-[-0.3px]">X 111.760000&nbsp; Y 64.770000</span>
          <span className="w-[185px] whitespace-nowrap border-r border-[#dcdcd4] pl-[3px] leading-[15px] tracking-[-0.3px]">dx 0.000000&nbsp; dy 0.000000&nbsp; dist 0.000</span>
          <span className="w-[39px] border-r border-[#dcdcd4] pl-[4px] leading-[15px]">mm</span>
          <span className="whitespace-nowrap pl-[3px] text-[9px] leading-[15px]">Add graphic line</span>
        </div>
      </div>

      <WinTaskbar />

      <div className="h-[22px] shrink-0 bg-linear-to-b from-[#686868] to-[#7c7c7c]" />

      {/* AnyDesk status row */}
      <div className="flex h-[24px] shrink-0 items-center border-t border-[#bbb] bg-white pl-[4px] text-[12.9px] text-[#333]">
        <svg width="16" height="15" viewBox="0 0 16 15">
          <rect width="16" height="12" fill="#3aa84a" />
          <path d="M3 5l4 4 6-7" stroke="#fff" strokeWidth="2" fill="none" />
          <path d="M4 14h8" stroke="#3aa84a" />
        </svg>
        <span className="ml-[10px]">Connected to 918936365 (SYSTEM) (identity verified).</span>
        <span className="ml-auto">00:06</span>
        <div className="ml-[10px] flex items-center gap-[10px] pr-[3px]">
          <div className="h-[11px] w-[15px] rounded-[2px] bg-[#e6e6e6]" />
          <svg width="12" height="14" viewBox="0 0 12 14">
            <rect x="0" y="6" width="12" height="8" fill="#777" />
            <path d="M2.5 6V4a3.5 3.5 0 0 1 7 0v2" stroke="#777" strokeWidth="1.6" fill="none" />
          </svg>
          <svg className="ml-[5px]" width="8" height="13" viewBox="0 0 8 13">
            <path d="M0 0h8v1L4 6.5 8 12v1H0v-1l4-5.5L0 1z" fill="#e2e2e2" />
          </svg>
          <div className="ml-[6px] h-[13px] w-[12px] rounded-[2px] bg-[#e2e2e2]" />
        </div>
      </div>

      {/* host taskbar */}
      <div className="relative flex h-[30px] shrink-0 items-center bg-linear-to-b from-[#4c4c4c] via-[#2e2e2e] to-[#0c0c0c]">
        <div className="ml-[65px] flex items-center gap-[8px]">
          <svg width="15" height="13" viewBox="0 0 15 13">
            <rect width="15" height="11" fill="#3f74b8" stroke="#ccd" />
            <rect x="4" y="11" width="7" height="2" fill="#ccd" />
          </svg>
          <svg width="15" height="13" viewBox="0 0 15 13">
            <rect width="15" height="13" fill="#2a5aa8" stroke="#ccd" />
            <rect x="3" y="3" width="6" height="4" fill="#eee" />
            <rect x="6" y="6" width="6" height="4" fill="#cde" />
          </svg>
          <svg width="16" height="16" viewBox="0 0 16 16" fill="none">
            <circle cx="8" cy="9" r="5" stroke="#3a9ae0" strokeWidth="2" />
            <path d="M3 9h10" stroke="#3a9ae0" strokeWidth="1.5" />
            <path d="M1 15C3 9 9 2 15 1c-1 3-3 5-5 6" stroke="#e8b020" strokeWidth="1.2" />
          </svg>
        </div>
        <span className="ml-[16px] self-start pt-[2px] text-[10px] font-bold leading-[12px] text-white">»</span>
        <div className="ml-[13px] flex items-center gap-[4px]">
          <GlassButton
            width="w-[156px]"
            tracking="tracking-[-0.6px]"
            icon={
              <svg width="14" height="17" viewBox="0 0 13 16">
                <path d="M0 2h9l4 3v11H0z" fill="#e8c868" />
                <path d="M8 0l4 4h-2v4H7V4H5z" fill="#4ab04a" />
              </svg>
            }
          >
            MK
          </GlassButton>
          <GlassButton
            width="w-[155px]"
            tracking="tracking-[-0.6px]"
            icon={
              <svg width="14" height="14" viewBox="0 0 14 14">
                <circle cx="7" cy="7" r="7" fill="#e04a3a" />
                <path d="M7 7L1 10.5A7 7 0 0 0 7 14z" fill="#3aa84a" />
                <path d="M7 7l6-3.5A7 7 0 0 1 7 14z" fill="#f2c230" />
                <circle cx="7" cy="7" r="3" fill="#3a7ae0" stroke="#fff" />
              </svg>
            }
          >
            fabzero/monofabsr...
          </GlassButton>
          <GlassButton width="w-[156px]" active tracking="tracking-[-1.3px]" icon={<AnyDeskMark s={13} />}>
            918936365 - AnyDesk
          </GlassButton>
          <GlassButton
            width="w-[156px]"
            tracking="tracking-[-1px]"
            icon={
              <svg width="14" height="16" viewBox="0 0 14 16">
                <rect width="14" height="16" fill="#c8dff2" />
                <path d="M2 4h10M2 7h10M2 10h10M2 13h10" stroke="#7a9ac0" />
              </svg>
            }
          >
            Anydesk.txt - Notep...
          </GlassButton>
        </div>
        <span className="ml-[37px] text-[12px] text-white">EN</span>
        <svg className="ml-[16px]" width="6" height="10" viewBox="0 0 6 10" fill="none">
          <path d="M5 1L1 5l4 4" stroke="#fff" strokeWidth="1.6" />
        </svg>
        <svg className="ml-[7px]" width="15" height="15" viewBox="0 0 15 15">
          <circle cx="7" cy="7" r="7" fill="#3a88c8" />
          <path d="M2 10L11 2M5 12l8-7" stroke="#cde" />
          <rect x="9" y="9" width="6" height="6" fill="#3aa84a" />
        </svg>
        <div className="ml-[3px]">
          <AnyDeskMark s={16} />
        </div>
        <svg className="ml-[15px]" width="8" height="14" viewBox="0 0 8 14">
          <rect x="0.5" y="1.5" width="7" height="12" rx="1" fill="#a8e0b8" stroke="#ddd" />
        </svg>
        <svg className="ml-[7px]" width="14" height="14" viewBox="0 0 14 14">
          <rect x="0" y="1" width="12" height="10" fill="#2a5aa8" stroke="#ccd" />
          <circle cx="10" cy="10" r="4" fill="#3aa84a" />
        </svg>
        <svg className="ml-[5px]" width="13" height="12" viewBox="0 0 13 12" fill="none">
          <path d="M0 4h2l4-3v10L2 8H0z" fill="#ddd" />
          <path d="M8 3c1 2 1 4 0 6M10.5 1.5c2 3 2 6 0 9" stroke="#ddd" />
        </svg>
        <span className="ml-[7px] text-[11.5px] text-white">17:48</span>
      </div>

      {/* Windows orb overlaps the row above */}
      <svg className="absolute bottom-0 left-[9px]" width="41" height="35" viewBox="0 0 41 35">
        <circle cx="20.5" cy="20" r="19.5" fill="#24486e" stroke="#7a8a9a" />
        <circle cx="20.5" cy="20" r="15" fill="#2e6a9e" />
        <path d="M12 13l7-1v7h-8z" fill="#e8502a" />
        <path d="M21 12l8-1-1 8h-7z" fill="#7ab83a" />
        <path d="M11 21h8v7l-9-1z" fill="#3a8ae0" />
        <path d="M21 21h7l-1 8-6-1z" fill="#f2c230" />
      </svg>

      <Dialog />
    </div>
  );
}
